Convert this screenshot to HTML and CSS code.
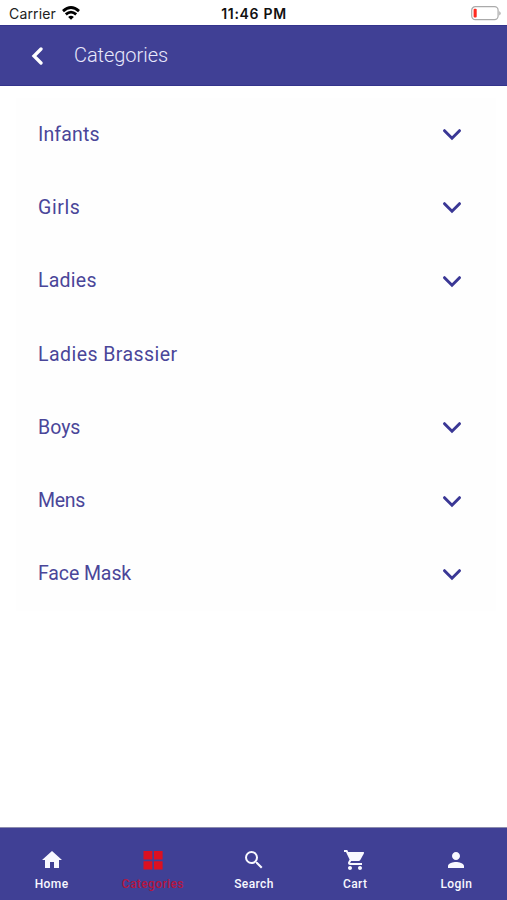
FILE: index.html
```html
<!DOCTYPE html>
<html lang="en">
<head>
<meta charset="utf-8">
<title>Categories</title>
<link rel="stylesheet" href="styles.css">
</head>
<body>
<div class="app">
  <div class="status">
    <div class="carrier"><span>Carrier</span>
      <svg width="18" height="14" viewBox="0 0 18 14" fill="none" stroke="#000" stroke-width="2.8"><path d="M1 5.1Q9-2.1 17 5.1"/><path d="M3.8 8.4Q9 3.8 14.2 8.4"/><path d="M9 13.8L6.1 10.9Q9 8.6 11.9 10.9Z" fill="#000" stroke="none"/></svg>
    </div>
    <span class="time">11:46 PM</span>
    <svg class="battery" width="31" height="15" viewBox="0 0 31 15"><rect x=".7" y=".7" width="26.4" height="13" rx="3.6" fill="#fff" stroke="#aaa" stroke-width="1.2"/><rect x="2.6" y="2.8" width="3.1" height="8.8" rx="1" fill="#ff2a20"/><path d="M28.4 4.9Q30.8 7.2 28.4 9.5Z" fill="#999"/></svg>
  </div>
  <header class="header">
    <svg width="12" height="18" viewBox="0 0 12 18" fill="none" stroke="#fff" stroke-width="3.3" stroke-linecap="round"><path d="M10 2L3 9L10 16"/></svg>
    <h1>Categories</h1>
  </header>
  <main>
    <ul class="list">
      <li><span class="infants">Infants</span><svg class="chev" viewBox="0 0 20 13"><path d="M2.5 2.7L10 10.2L17.5 2.7"/></svg></li>
      <li><span class="girls">Girls</span><svg class="chev" viewBox="0 0 20 13"><path d="M2.5 2.7L10 10.2L17.5 2.7"/></svg></li>
      <li><span class="ladies">Ladies</span><svg class="chev" viewBox="0 0 20 13"><path d="M2.5 2.7L10 10.2L17.5 2.7"/></svg></li>
      <li><span class="brassier">Ladies Brassier</span></li>
      <li><span class="boys">Boys</span><svg class="chev" viewBox="0 0 20 13"><path d="M2.5 2.7L10 10.2L17.5 2.7"/></svg></li>
      <li><span class="mens">Mens</span><svg class="chev" viewBox="0 0 20 13"><path d="M2.5 2.7L10 10.2L17.5 2.7"/></svg></li>
      <li><span class="mask">Face Mask</span><svg class="chev" viewBox="0 0 20 13"><path d="M2.5 2.7L10 10.2L17.5 2.7"/></svg></li>
    </ul>
  </main>
  <nav class="tabs">
    <a><svg viewBox="0 0 24 24"><path d="M10 20v-6h4v6h5v-8h3L12 3 2 12h3v8z"/></svg><span>Home</span></a>
    <a class="active"><svg viewBox="0 0 24 24"><path d="M2.5 3H11.3V11.6H2.5zM13 3H21.6V11.6H13zM2.5 13.2H11.3V21.6H2.5zM13 13.2H21.6V21.6H13z"/></svg><span>Categories</span></a>
    <a><svg viewBox="0 0 24 24"><path d="M15.5 14h-.79l-.28-.27A6.47 6.47 0 0 0 16 9.5 6.5 6.5 0 1 0 9.5 16c1.61 0 3.09-.59 4.23-1.57l.27.28v.79l5 4.99L20.49 19zm-6 0a4.5 4.5 0 1 1 0-9 4.5 4.5 0 0 1 0 9z"/></svg><span>Search</span></a>
    <a><svg viewBox="0 0 24 24"><path d="M7 18c-1.1 0-1.99.9-1.99 2S5.9 22 7 22s2-.9 2-2-.9-2-2-2zM1 2v2h2l3.6 7.59-1.35 2.45c-.16.28-.25.61-.25.96 0 1.1.9 2 2 2h12v-2H7.42c-.14 0-.25-.11-.25-.25l.03-.12.9-1.63h7.45c.75 0 1.41-.41 1.75-1.03l3.58-6.49A1 1 0 0 0 20 4H5.21l-.94-2zm16 16c-1.1 0-1.99.9-1.99 2s.89 2 1.99 2 2-.9 2-2-.9-2-2-2z"/></svg><span>Cart</span></a>
    <a><svg viewBox="0 0 24 24"><path d="M12 12c2.21 0 4-1.79 4-4s-1.79-4-4-4-4 1.79-4 4 1.79 4 4 4zm0 2c-2.67 0-8 1.34-8 4v2h16v-2c0-2.66-5.33-4-8-4z"/></svg><span>Login</span></a>
  </nav>
</div>
</body>
</html>
```
FILE: styles.css
```css
* { box-sizing: border-box; }
body { margin: 0; background: #fff; font-family: Roboto, sans-serif; }
.app { display: flex; flex-direction: column; width: 507px; height: 900px; overflow: hidden; }
.status {
  display: grid; grid-template-columns: 1fr auto 1fr; align-items: center;
  height: 25px; padding: 2px 5px 0 9px; flex: none;
  font-family: Inter, sans-serif; font-size: 14px; line-height: 18px; color: #222;
}
.carrier { display: flex; align-items: center; gap: 6px; letter-spacing: .15px; }
.carrier svg { margin-top: -2px; }
.time { margin-right: 3px; font-weight: 600; color: #111; letter-spacing: .7px; }
.battery { justify-self: end; }
.header {
  display: flex; align-items: center; gap: 31px; flex: none;
  height: 61px; padding: 0 0 1px 31px;
  background: #404095; border-top: 1px solid #34348c; border-bottom: 1px solid #34348c;
}
.header svg { position: relative; top: 1px; }
.header h1 { margin: 0; font-size: 20px; line-height: 24px; font-weight: 300; letter-spacing: -.05px; color: #e8e8fc; }
main { flex: 1; padding: 12px 11px 0 16px; }
.list { list-style: none; margin: 0; padding: 0; background: #fefefe; }
.list li { display: flex; align-items: center; justify-content: space-between; height: 73.3px; padding: 0 34px 0 22px; }
.list span { font-size: 19.5px; line-height: 24px; color: #4a4699; }
.list .infants { letter-spacing: .15px; }
.list .girls { letter-spacing: .6px; }
.list .ladies { letter-spacing: .25px; }
.list .brassier { letter-spacing: .45px; }
.list .mens { letter-spacing: -.3px; }
.list .mask { letter-spacing: -.1px; }
.chev { width: 20px; height: 13px; fill: none; stroke: #3a3795; stroke-width: 3; stroke-linecap: round; }
.tabs { display: flex; flex: none; height: 73px; padding: 21px 0 0 1px; background: #404095; border-top: 1px solid #8c8cae; }
.tabs a { flex: 1; display: flex; flex-direction: column; align-items: center; gap: 5px; color: #f8f8ff; }
.tabs svg { width: 24px; height: 24px; margin: -1px 0 0; fill: currentColor; }
.tabs span { font-size: 12px; line-height: 14px; font-weight: 500; letter-spacing: .4px; }
.tabs .active { color: #dc1020; }
.tabs .active span { color: #b41640; }
```
